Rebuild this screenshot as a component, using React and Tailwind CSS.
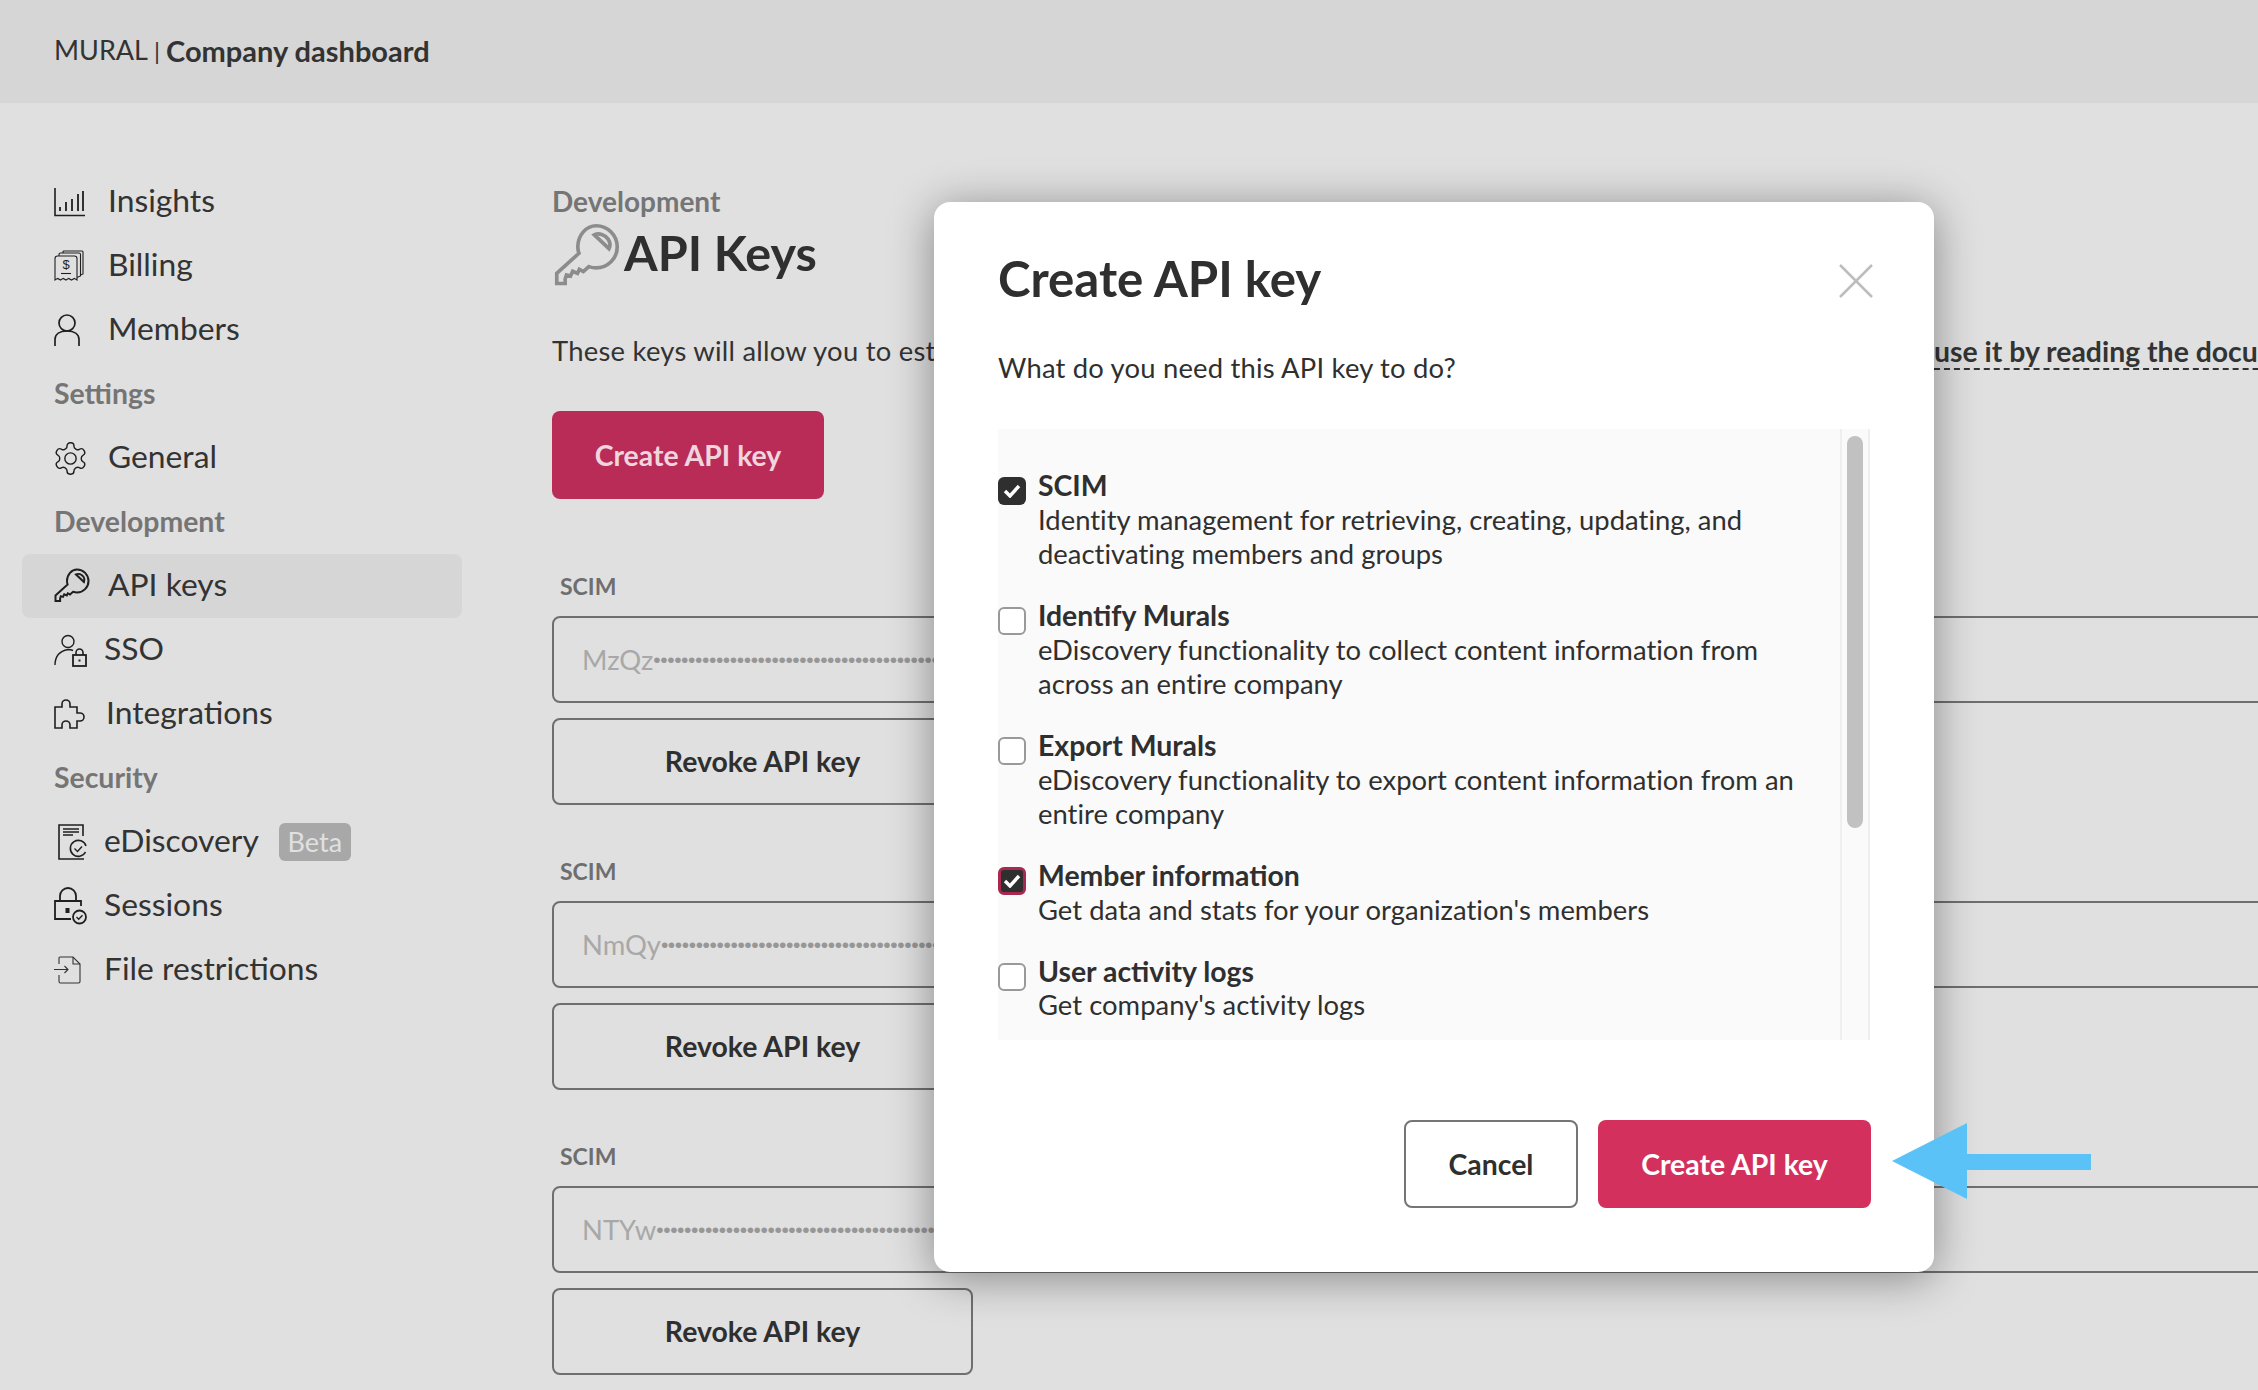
import React from 'react';

const FONT = "font-['Lato','Open_Sans',sans-serif]";

function InsightsIcon() {
  return (
    <svg width="31" height="30" viewBox="0 0 31 30" fill="none" stroke="#1f1f1f" strokeWidth="1.4">
      <path d="M1 1v27.500h30" strokeWidth="1.600" />
      <path d="M6 24v-4M12 24v-9M18 24v-12M24 24v-17M29 24v-20" strokeWidth="1.800" />
    </svg>
  );
}

function BillingIcon() {
  return (
    <svg width="30" height="32" viewBox="0 0 30 32" fill="none" stroke="#1f1f1f" strokeWidth="1.1">
      <path d="M1 30V8.500Q1 6 3.500 6h17Q23 6 23 8.500V30l-2.700-1.600-2.800 1.600-2.800-1.600-2.700 1.600-2.800-1.600-2.700 1.600-2.800-1.600z" />
      <path d="M5 6V4.500Q5 3 6.500 3H25q1.500 0 1.500 1.500V26l-3.500 1.500" />
      <path d="M9 3V1.700Q9 1 10 1h18q1 0 1 1v22l-2.500 1" />
      <path d="M7 23.500h10" />
      <text x="12" y="19" fontSize="13" textAnchor="middle" fill="#1f1f1f" stroke="none" fontFamily="Liberation Sans">$</text>
    </svg>
  );
}

function MemberIcon() {
  return (
    <svg width="26" height="33" viewBox="0 0 26 33" fill="none" stroke="#1f1f1f" strokeWidth="1.7">
      <circle cx="13" cy="9" r="8" />
      <path d="M1 32v-6.500C1 20 6 17 13 17s12 3 12 8.500V32" />
    </svg>
  );
}

function GearIcon() {
  return (
    <svg width="33" height="33" viewBox="1.500 1.500 21 21" fill="none" stroke="#1f1f1f" strokeWidth="0.900" strokeLinejoin="round">
      <path d="M12.220 2h-.440a2 2 0 0 0-2 2v.180a2 2 0 0 1-1 1.730l-.430.250a2 2 0 0 1-2 0l-.150-.080a2 2 0 0 0-2.730.730l-.220.380a2 2 0 0 0 .730 2.730l.150.100a2 2 0 0 1 1 1.720v.510a2 2 0 0 1-1 1.740l-.150.090a2 2 0 0 0-.730 2.730l.220.380a2 2 0 0 0 2.730.730l.150-.080a2 2 0 0 1 2 0l.430.250a2 2 0 0 1 1 1.730V20a2 2 0 0 0 2 2h.440a2 2 0 0 0 2-2v-.180a2 2 0 0 1 1-1.730l.430-.250a2 2 0 0 1 2 0l.150.080a2 2 0 0 0 2.730-.730l.220-.390a2 2 0 0 0-.730-2.730l-.150-.080a2 2 0 0 1-1-1.740v-.500a2 2 0 0 1 1-1.740l.150-.090a2 2 0 0 0 .730-2.730l-.220-.380a2 2 0 0 0-2.730-.730l-.150.080a2 2 0 0 1-2 0l-.430-.250a2 2 0 0 1-1-1.730V4a2 2 0 0 0-2-2z" />
      <circle cx="12" cy="12" r="3.600" />
    </svg>
  );
}

function KeyIcon({ size = 36, color = '#1f1f1f', weight = 2 }) {
  return (
    <svg width={size} height={size} viewBox="0 0 36 36" fill="none" stroke={color} strokeWidth={weight} strokeLinejoin="miter">
      <path d="M23 1.500a11.500 11.500 0 0 1 11.500 11.500c0 6.400-5.200 11.500-11.500 11.500-1.400 0-2.800-.300-4-.700l-3 2.700-2.200-1.200-1 2.200-2.600-1.200-1.200 2.600-2.200-.600-.700 2.200v2.500H1.500v-5.500L13.600 16.500c-.500-1.200-.600-2.300-.600-3.500C13 6.600 17.600 1.500 23 1.500z" />
      <path d="M22 6.500l8 7.500c.800-1.600.600-3.600-.500-5.200-1.700-2.400-5-3.600-7.500-2.300z" />
    </svg>
  );
}

function SsoIcon() {
  return (
    <svg width="33" height="33" viewBox="0 0 33 33" fill="none" stroke="#1f1f1f" strokeWidth="1.400">
      <circle cx="14" cy="7.500" r="6" />
      <path d="M1 31c0-9 5-14 13-15.500 2 0 3.500.300 5 1" />
      <rect x="19" y="21" width="13" height="11" strokeWidth="1.800" />
      <path d="M22 21v-2.500a3.500 3.500 0 0 1 7 0V21" strokeWidth="1.600" />
      <rect x="24.500" y="25.500" width="2" height="2" fill="#1f1f1f" stroke="none" />
    </svg>
  );
}

function PuzzleIcon() {
  return (
    <svg width="33" height="30" viewBox="0 0 33 30" fill="none" stroke="#1f1f1f" strokeWidth="1.600">
      <path d="M1 8h7V5a4 4 0 0 1 8 0v3h7v6h3a4 4 0 0 1 0 8h-3v7h-7v-3a4 4 0 0 0-8 0v3H1z" />
    </svg>
  );
}

function DiscoveryIcon() {
  return (
    <svg className="ml-1" width="30" height="36" viewBox="0 0 30 36" fill="none" stroke="#1f1f1f" strokeWidth="1.600">
      <path d="M25 12V1H1v34h25" />
      <path d="M5 5h16M5 8h16M5 11h10" strokeWidth="1.400" />
      <path d="M28 22a8 8 0 1 0-.500 6" />
      <path d="M16.500 24.500l3 3 4.500-5" strokeWidth="1.400" />
    </svg>
  );
}

function SessionIcon() {
  return (
    <svg width="33" height="38" viewBox="0 0 33 38" fill="none" stroke="#1f1f1f" strokeWidth="1.800">
      <path d="M17 32H1V14h26v5" />
      <path d="M6 14V9a8 8 0 0 1 16 0v5" />
      <rect x="11.500" y="21" width="4" height="5" fill="#1f1f1f" stroke="none" />
      <circle cx="25.500" cy="30" r="6.500" fill="none" />
      <path d="M22.500 30l2.200 2.200 3.800-4" strokeWidth="1.400" />
    </svg>
  );
}

function FileIcon() {
  return (
    <svg width="27" height="28" viewBox="0 0 27 28" fill="none" stroke="#333" strokeWidth="1.100">
      <path d="M5 8V2q0-1 1-1h13l7 7v17.500q0 1.500-1.500 1.500H6.500Q5 27 5 25.500V19" />
      <path d="M19 1v7h7" />
      <path d="M0 13.500h14M10.500 10l3.500 3.500-3.500 3.500" />
    </svg>
  );
}

function NavRow({ icon, label, gap = 'w-[54px]', active, badge }) {
  return (
    <div className={`h-16 rounded-lg flex items-center pl-8 text-[31.8px] text-[#333] ${active ? 'bg-[#d6d6d6]' : ''}`}>
      <div className={`${gap} flex items-center shrink-0`}>{icon}</div>
      <span className="pb-[3px]">{label}</span>
      {badge && <span className="ml-5 rounded-md bg-[#a8a8a8] w-[72px] h-[38px] flex items-center justify-center text-[27px] text-[#e0e0e0]">{badge}</span>}
    </div>
  );
}

function NavLabel({ children }) {
  return <div className="h-16 flex items-center pl-8 pb-[2px] text-[28.4px] font-bold text-[#757575]">{children}</div>;
}

function KeyGroup({ prefix }) {
  return (
    <div className="mb-[37px]">
      <div className="h-[59px] pl-[8px] pt-[15px] text-[23px] font-bold leading-[28px] text-[#6e6e6e]">SCIM</div>
      <div className="h-[87px] w-[1800px] rounded-lg border-2 border-[#6f6f6f] flex items-center pl-[28px] text-[#a8a8a8] text-[27.4px] whitespace-nowrap overflow-hidden">
        {prefix}
        <span className="font-['Liberation_Sans',sans-serif] text-[21px] tracking-[-0.4px] text-[#979797]">{'•'.repeat(60)}</span>
      </div>
      <div className="mt-[15px] h-[87px] w-[421px] rounded-lg border-2 border-[#6f6f6f] flex items-center justify-center text-[28.4px] font-bold text-[#2f2f2f]">
        Revoke API key
      </div>
    </div>
  );
}

function ScopeItem({ title, lines, checked, focused }) {
  return (
    <div className="flex mb-[26.5px]">
      <div className={`mt-[9px] w-7 h-7 shrink-0 rounded-md flex items-center justify-center ${checked ? 'bg-[#2f2f2f]' : 'border-2 border-[#999] bg-white'} ${focused ? 'border-[3px] border-[#a8284f]' : ''}`}>
        {checked && (
          <svg width="18" height="14" viewBox="0 0 18 14" fill="none" stroke="white" strokeWidth="3.400">
            <path d="M2 7l5 5 9-10" />
          </svg>
        )}
      </div>
      <div className="ml-3 text-[27.4px] leading-[34.5px] tracking-[0.03px] text-[#2f2f2f]">
        <div className="font-bold text-[28.4px] tracking-normal">{title}</div>
        {lines.map((line) => (
          <div key={line} className="whitespace-nowrap">{line}</div>
        ))}
      </div>
    </div>
  );
}

const scopes = [
  { title: 'SCIM', checked: true, lines: ['Identity management for retrieving, creating, updating, and', 'deactivating members and groups'] },
  { title: 'Identify Murals', lines: ['eDiscovery functionality to collect content information from', 'across an entire company'] },
  { title: 'Export Murals', lines: ['eDiscovery functionality to export content information from an', 'entire company'] },
  { title: 'Member information', checked: true, focused: true, lines: ["Get data and stats for your organization's members"] },
  { title: 'User activity logs', lines: ["Get company's activity logs"] },
];

export default function App() {
  return (
    <div className={`relative w-[2258px] h-[1390px] overflow-hidden bg-[#e0e0e0] text-[#2f2f2f] ${FONT}`}>
      <header className="h-[103px] bg-[#d6d6d6] flex items-center pl-[54px] pb-[2px] text-[27.4px] text-[#333]">
        <span className="text-[27px]">MURAL</span>
        <span className="mx-[6px] text-[24px]">|</span>
        <span className="font-bold text-[29px]">Company dashboard</span>
      </header>

      <div className="flex">
        <aside className="w-[530px] shrink-0 pt-[67px] pl-[22px] pr-[68px]">
          <NavRow icon={<InsightsIcon />} label="Insights" />
          <NavRow icon={<BillingIcon />} label="Billing" />
          <NavRow icon={<MemberIcon />} label="Members" />
          <NavLabel>Settings</NavLabel>
          <NavRow icon={<GearIcon />} label="General" />
          <NavLabel>Development</NavLabel>
          <NavRow icon={<KeyIcon />} label="API keys" active />
          <NavRow icon={<SsoIcon />} label="SSO" gap="w-[50px]" />
          <NavRow icon={<PuzzleIcon />} label="Integrations" gap="w-[52px]" />
          <NavLabel>Security</NavLabel>
          <NavRow icon={<DiscoveryIcon />} label="eDiscovery" gap="w-[50px]" badge="Beta" />
          <NavRow icon={<SessionIcon />} label="Sessions" gap="w-[50px]" />
          <NavRow icon={<FileIcon />} label="File restrictions" gap="w-[50px]" />
        </aside>

        <main className="pl-[22px] pt-[81px] flex-1">
          <div className="text-[28px] font-bold leading-[34px] text-[#757575]">Development</div>
          <div className="flex items-center h-[66px] mt-[5px]">
            <div className="pl-[2px] w-[72px]"><KeyIcon size={66} color="#8c8c8c" weight={2} /></div>
            <h1 className="text-[48.500px] leading-[60px] pb-[8px] font-bold text-[#2f2f2f]">API Keys</h1>
          </div>
          <p className="mt-[45px] flex whitespace-nowrap text-[27.4px] leading-[34px] tracking-[0.25px] text-[#333]">
            <span className="w-[1382px] overflow-hidden shrink-0">These keys will allow you to establish a secure connection with the MURAL API. Learn how to</span>
            <span className="font-bold text-[28.4px] tracking-normal border-b-2 border-dashed border-[#333]">use it by reading the documentation</span>
          </p>
          <div className="mt-[41px] mb-[58px] w-[272px] h-[88px] rounded-lg bg-[#b92c57] flex items-center justify-center text-[28.4px] font-bold text-[#f0d5de]">
            Create API key
          </div>
          <KeyGroup prefix="MzQz" />
          <KeyGroup prefix="NmQy" />
          <KeyGroup prefix="NTYw" />
        </main>
      </div>

      {/* dialog */}
      <div className="absolute left-[934px] top-[202px] w-[1000px] h-[1070px] rounded-2xl bg-white shadow-[0_6px_45px_rgba(0,0,0,0.4)] px-16 pt-[45px]">
        <div className="flex items-center justify-between h-[70px]">
          <h2 className="text-[49.200px] leading-[60px] pb-[8px] font-bold text-[#2f2f2f]">Create API key</h2>
          <svg className="-mr-[3px] mb-[2px]" width="34" height="34" viewBox="0 0 34 34" stroke="#bdbdbd" strokeWidth="2.500">
            <path d="M1 1l32 32M33 1L1 33" />
          </svg>
        </div>
        <p className="mt-[34px] text-[27.4px] leading-[34px] tracking-[0.2px] text-[#2f2f2f]">What do you need this API key to do?</p>
        <div className="mt-[44px] h-[611px] w-[872px] flex overflow-hidden">
          <div className="w-[842px] bg-[#fafafa] pt-[39px] overflow-hidden">
            {scopes.map((s) => (
              <ScopeItem key={s.title} {...s} />
            ))}
          </div>
          <div className="w-[30px] border-x-2 border-[#efefef] bg-[#fafafa] pt-[7px] flex justify-center">
            <div className="w-4 h-[392px] rounded-full bg-[#c1c1c1]" />
          </div>
        </div>
        <div className="mt-20 flex justify-end gap-5 w-[873px]">
          <div className="w-[174px] h-[88px] rounded-lg border-2 border-[#757575] flex items-center justify-center text-[28.4px] font-bold text-[#2f2f2f]">Cancel</div>
          <div className="w-[273px] h-[88px] rounded-lg bg-[#d4305e] flex items-center justify-center text-[28.4px] font-bold text-white">Create API key</div>
        </div>
      </div>

      {/* annotation arrow */}
      <svg className="absolute left-[1892px] top-[1123px]" width="200" height="76" viewBox="0 0 200 76" fill="#5bc2f8">
        <path d="M0 38L75 0v31h124v16H75v29z" />
      </svg>
    </div>
  );
}
